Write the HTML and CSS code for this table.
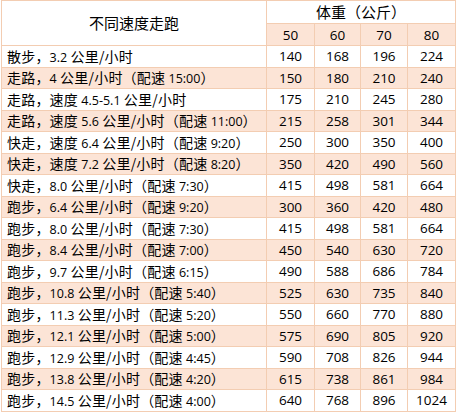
FILE: index.html
```html
<!DOCTYPE html>
<html lang="zh-CN">
<head>
<meta charset="utf-8">
<link rel="stylesheet" href="styles.css">
</head>
<body>
<table class="pace">
  <colgroup>
    <col class="c-name"><col class="c-w1"><col class="c-w2"><col class="c-w3"><col class="c-w4">
  </colgroup>
  <thead>
    <tr class="h1">
      <th rowspan="2" class="title">不同速度走跑</th>
      <th colspan="4" class="weight">体重（公斤）</th>
    </tr>
    <tr class="h2">
      <th class="num">50</th><th class="num">60</th><th class="num">70</th><th class="num">80</th>
    </tr>
  </thead>
  <tbody>
    <tr><td class="name">散步，<span class="n">3.2</span> 公里/小时</td><td>140</td><td>168</td><td>196</td><td>224</td></tr>
    <tr class="alt"><td class="name">走路，<span class="n">4</span> 公里/小时（配速 <span class="n">15:00</span>）</td><td>150</td><td>180</td><td>210</td><td>240</td></tr>
    <tr><td class="name">走路，速度 <span class="n">4.5-5.1</span> 公里/小时</td><td>175</td><td>210</td><td>245</td><td>280</td></tr>
    <tr class="alt"><td class="name">走路，速度 <span class="n">5.6</span> 公里/小时（配速 <span class="n">11:00</span>）</td><td>215</td><td>258</td><td>301</td><td>344</td></tr>
    <tr><td class="name">快走，速度 <span class="n">6.4</span> 公里/小时（配速 <span class="n">9:20</span>）</td><td>250</td><td>300</td><td>350</td><td>400</td></tr>
    <tr class="alt"><td class="name">快走，速度 <span class="n">7.2</span> 公里/小时（配速 <span class="n">8:20</span>）</td><td>350</td><td>420</td><td>490</td><td>560</td></tr>
    <tr><td class="name">快走，<span class="n">8.0</span> 公里/小时（配速 <span class="n">7:30</span>）</td><td>415</td><td>498</td><td>581</td><td>664</td></tr>
    <tr class="alt"><td class="name">跑步，<span class="n">6.4</span> 公里/小时（配速 <span class="n">9:20</span>）</td><td>300</td><td>360</td><td>420</td><td>480</td></tr>
    <tr><td class="name">跑步，<span class="n">8.0</span> 公里/小时（配速 <span class="n">7:30</span>）</td><td>415</td><td>498</td><td>581</td><td>664</td></tr>
    <tr class="alt"><td class="name">跑步，<span class="n">8.4</span> 公里/小时（配速 <span class="n">7:00</span>）</td><td>450</td><td>540</td><td>630</td><td>720</td></tr>
    <tr><td class="name">跑步，<span class="n">9.7</span> 公里/小时（配速 <span class="n">6:15</span>）</td><td>490</td><td>588</td><td>686</td><td>784</td></tr>
    <tr class="alt"><td class="name">跑步，<span class="n">10.8</span> 公里/小时（配速 <span class="n">5:40</span>）</td><td>525</td><td>630</td><td>735</td><td>840</td></tr>
    <tr><td class="name">跑步，<span class="n">11.3</span> 公里/小时（配速 <span class="n">5:20</span>）</td><td>550</td><td>660</td><td>770</td><td>880</td></tr>
    <tr class="alt"><td class="name">跑步，<span class="n">12.1</span> 公里/小时（配速 <span class="n">5:00</span>）</td><td>575</td><td>690</td><td>805</td><td>920</td></tr>
    <tr><td class="name">跑步，<span class="n">12.9</span> 公里/小时（配速 <span class="n">4:45</span>）</td><td>590</td><td>708</td><td>826</td><td>944</td></tr>
    <tr class="alt"><td class="name">跑步，<span class="n">13.8</span> 公里/小时（配速 <span class="n">4:20</span>）</td><td>615</td><td>738</td><td>861</td><td>984</td></tr>
    <tr><td class="name">跑步，<span class="n">14.5</span> 公里/小时（配速 <span class="n">4:00</span>）</td><td>640</td><td>768</td><td>896</td><td>1024</td></tr>
  </tbody>
</table>
</body>
</html>
```
FILE: styles.css
```css
html, body {
  margin: 0;
  padding: 0;
  background: #ffffff;
}
body {
  padding: 0 0 0 1px;
  font-family: "Noto Sans CJK SC", "Noto Sans", sans-serif;
  color: #000;
}
.pace {
  border-collapse: collapse;
  table-layout: fixed;
  width: 454px;
  font-size: 14px;
}
.c-name { width: 265px; }
.c-w1 { width: 48px; }
.c-w2 { width: 46px; }
.c-w3 { width: 47px; }
.c-w4 { width: 48px; }
.pace th, .pace td {
  border: 1px solid #f3cdb2;
  padding: 0;
  line-height: 16px;
  font-weight: normal;
  white-space: nowrap;
  overflow: hidden;
  vertical-align: middle;
  color: #000;
}
.pace th {
  text-align: center;
}
.h1 { height: 23px; }
.h2 { height: 22px; }
.title {
  font-size: 15px;
  background: #ffffff;
}
.weight {
  font-size: 15px;
  background: #ffffff;
}
.h2 .num {
  background: #fce4d6;
  font-family: "Open Sans", "Noto Sans", sans-serif;
  font-size: 13.5px;
}
.pace tbody tr { height: 21.5px; }
.pace tbody tr.alt { background: #fce4d6; }
.pace td {
  text-align: center;
  font-family: "Open Sans", "Noto Sans", sans-serif;
  font-size: 13.5px;
}
.pace td.name {
  text-align: left;
  padding-left: 5px;
  font-family: "Noto Sans CJK SC", "Noto Sans", sans-serif;
  font-size: 14px;
  letter-spacing: 0.2px;
}
.n {
  font-family: "Open Sans", "Noto Sans", sans-serif;
  font-size: 12.5px;
  line-height: 14px;
  letter-spacing: 0;
}
```
